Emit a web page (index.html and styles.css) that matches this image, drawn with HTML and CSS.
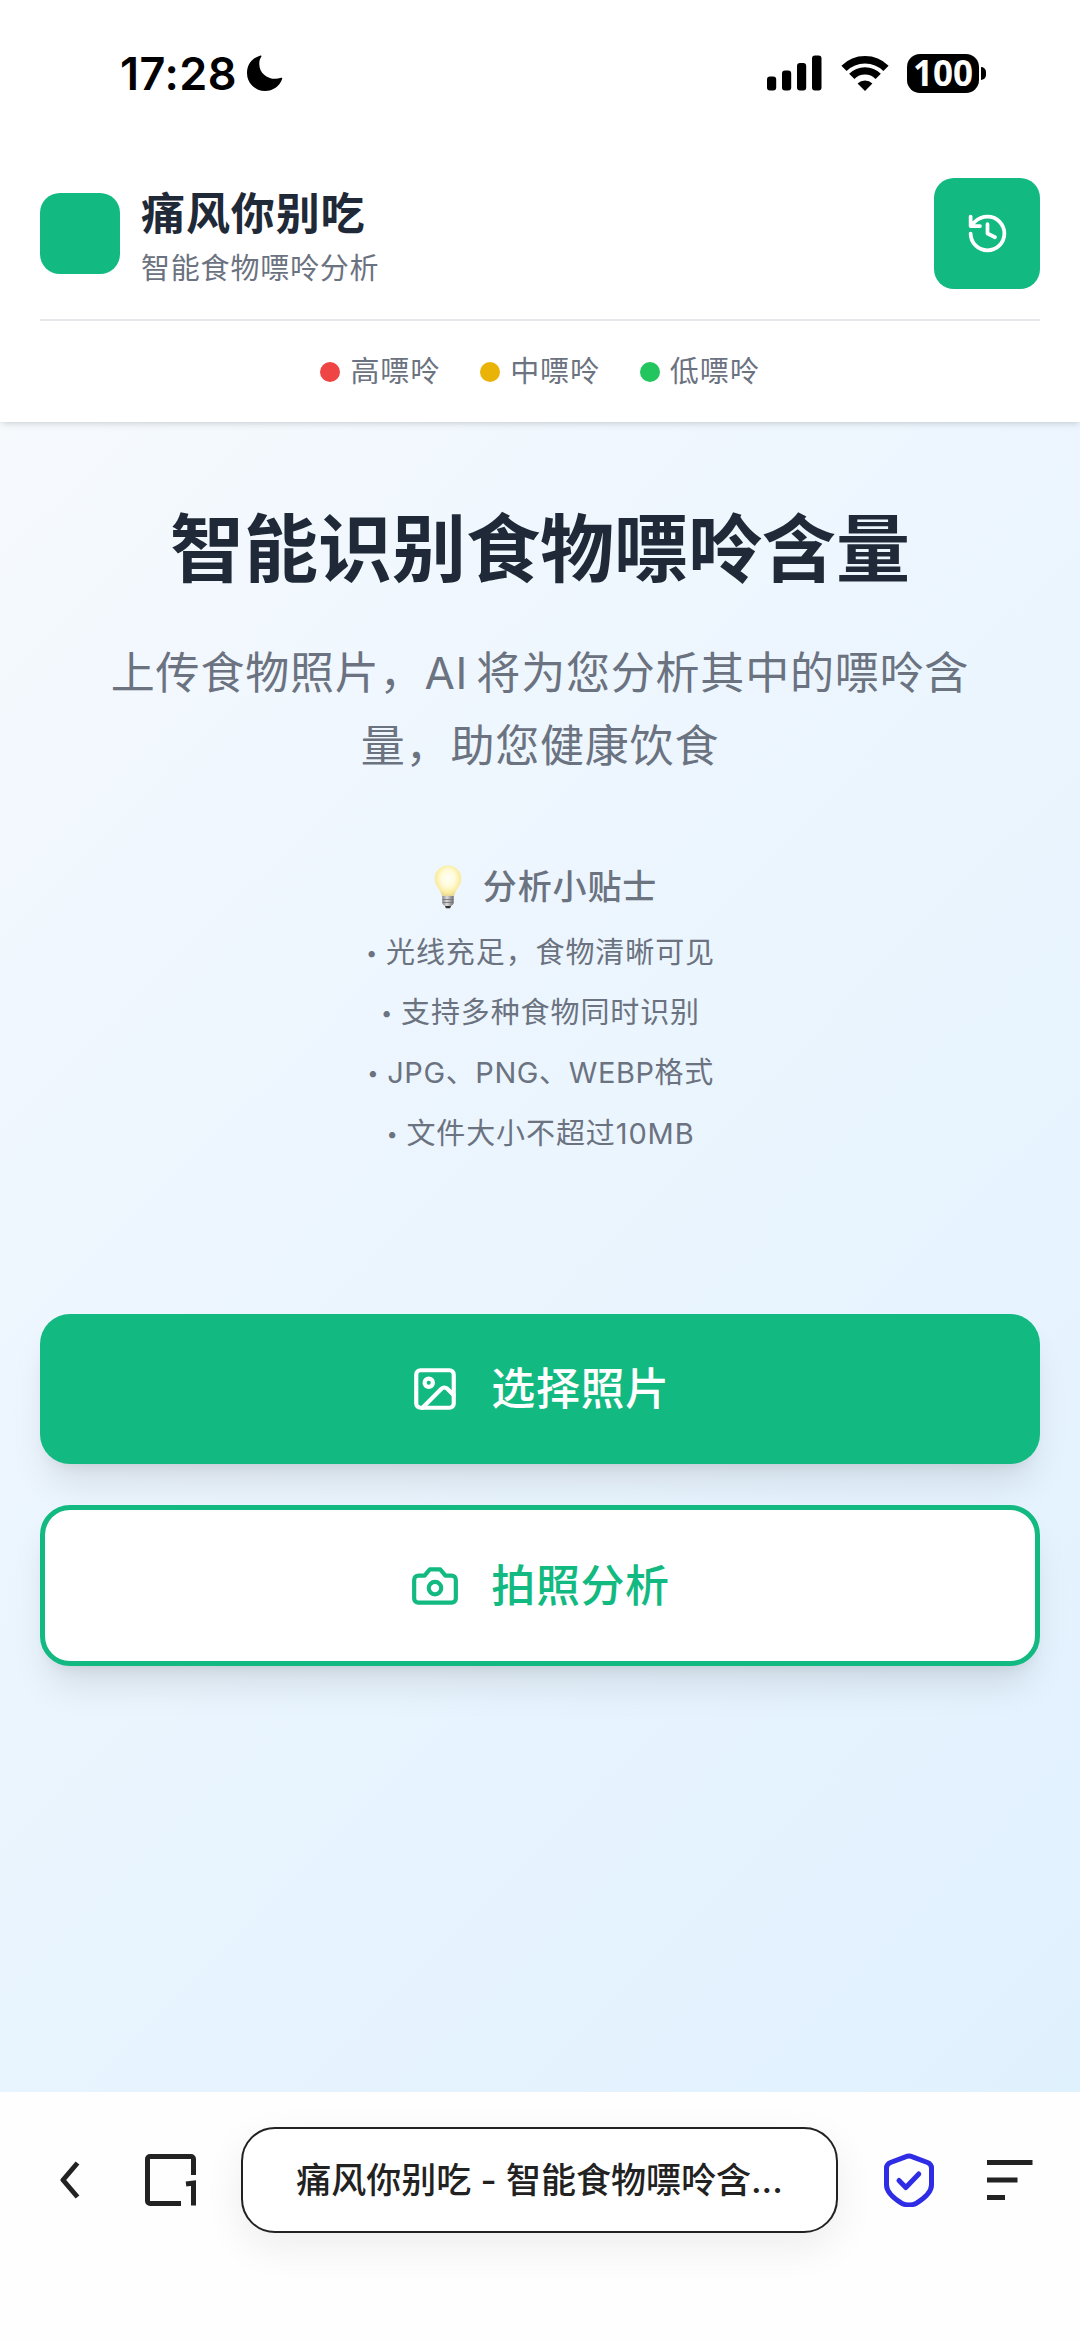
FILE: index.html
```html
<!DOCTYPE html>
<html lang="zh-CN">
<head>
<meta charset="utf-8">
<title>痛风你别吃 - 智能食物嘌呤含量分析</title>
<link rel="stylesheet" href="styles.css">
</head>
<body>
<div class="status">
  <span class="time">17:28</span>
  <svg class="moon" width="36" height="36" viewBox="0 0 36 36"><path d="M13.500 0.500C3.500 3.500 0 11 0 18a18 18 0 0 0 18 18c8 0 14.500-4.500 17.200-12.200.3-.9-.4-1.300-1.200-1C24 26.500 12 20 12.300 8.500c0-2.800.7-4.800 2-6.800.5-.8 0-1.400-.8-1.200z"/></svg>
  <svg class="signal" width="55" height="36" viewBox="0 0 55 36"><rect x="0" y="21.500" width="9.200" height="14" rx="3"/><rect x="15" y="15.500" width="9.200" height="20" rx="3"/><rect x="30" y="8" width="9.200" height="27.500" rx="3"/><rect x="45" y="0.500" width="9.500" height="35" rx="3"/></svg>
  <svg class="wifi" width="48" height="36" viewBox="0 0 48 36"><path d="M3 13.400a29.800 29.800 0 0 1 42 0M10.800 21.400a18.500 18.500 0 0 1 26.400 0" fill="none" stroke="#000" stroke-width="7.400"/><path d="M16.600 28.400a10.600 10.600 0 0 1 14.800 0L24 36z"/></svg>
  <span class="battery">100</span>
</div>
<header class="header">
  <div class="brand-row">
    <div class="logo"></div>
    <div class="brand">
      <h1 class="brand-name">痛风你别吃</h1>
      <p class="brand-sub">智能食物嘌呤分析</p>
    </div>
    <button class="history" aria-label="历史记录">
      <svg width="45" height="45" viewBox="0 0 24 24"><path d="M3 12a9 9 0 1 0 9-9 9.750 9.750 0 0 0-6.740 2.740L3 8M3 3v5h5M12 7v5l4 2"/></svg>
    </button>
  </div>
  <div class="legend">
    <span class="level high">高嘌呤</span>
    <span class="level mid">中嘌呤</span>
    <span class="level low">低嘌呤</span>
  </div>
</header>
<main class="main">
  <h2 class="title">智能识别食物嘌呤含量</h2>
  <p class="lead">上传食物照片，AI 将为您分析其中的嘌呤含量，助您健康饮食</p>
  <section class="tips">
    <div class="tips-title">
      <svg width="28" height="44" viewBox="0 0 28 44">
        <defs>
          <radialGradient id="glow" cx=".5" cy=".42" r=".55"><stop offset="0" stop-color="#fffff8"/><stop offset=".5" stop-color="#fffbd8"/><stop offset=".85" stop-color="#fbeb9c"/><stop offset="1" stop-color="#e8d998"/></radialGradient>
          <linearGradient id="cap" x1="0" x2="1"><stop offset="0" stop-color="#85858a"/><stop offset=".4" stop-color="#dcdcda"/><stop offset="1" stop-color="#6c6c70"/></linearGradient>
        </defs>
        <path d="M14 .5C6.300.5.8 6.300.8 13.500c0 8 6.200 10.500 7.200 18h12c1-7.500 7.200-10 7.200-18C27.200 6.300 21.700.5 14 .5z" fill="url(#glow)"/>
        <path d="M8.300 31h11.400v6.500c0 2-1.700 3-2.700 3.500l-1 2.300h-4L11 41c-1-.5-2.700-1.500-2.700-3.500z" fill="url(#cap)"/>
        <path d="M8.500 34.500h11M8.500 37.500h11" stroke="#77777b" stroke-width=".9"/>
        <path d="M11 41h6l-1 2.300h-4z" fill="#333"/>
      </svg>
      <span>分析小贴士</span>
    </div>
    <ul class="tips-list">
      <li>光线充足，食物清晰可见</li>
      <li>支持多种食物同时识别</li>
      <li class="mixed">JPG、PNG、WEBP格式</li>
      <li>文件大小不超过10MB</li>
    </ul>
  </section>
  <button class="btn primary">
    <svg width="50" height="50" viewBox="0 0 24 24"><rect x="3" y="3" width="18" height="18" rx="2"/><circle cx="9" cy="9" r="2"/><path d="m21 15-3.086-3.086a2 2 0 0 0-2.828 0L6 21"/></svg>
    <span>选择照片</span>
  </button>
  <button class="btn outline">
    <svg width="50" height="50" viewBox="0 0 24 24"><path d="M14.500 4h-5L7 7H4a2 2 0 0 0-2 2v9a2 2 0 0 0 2 2h16a2 2 0 0 0 2-2V9a2 2 0 0 0-2-2h-3l-2.500-3z"/><circle cx="12" cy="13" r="3"/></svg>
    <span>拍照分析</span>
  </button>
</main>
<nav class="toolbar">
  <svg class="back" width="20" height="38" viewBox="0 0 20 38"><path d="M17.500 2 3 19l14.500 17"/></svg>
  <svg class="tabs" width="52" height="52" viewBox="0 0 52 52"><path d="M48.500 21V5a2.500 2.500 0 0 0-2.500-2.500H5A2.500 2.500 0 0 0 2.500 5v42A2.500 2.500 0 0 0 5 49.500h31M41 30l7.500-1v22.500"/></svg>
  <div class="address">痛风你别吃 - 智能食物嘌呤含...</div>
  <svg class="shield" width="52" height="54" viewBox="0 0 52 54"><path d="M22.500 3.800q3.500-1.500 7 0L44.500 9.500q4 1.700 4 5.500v17c0 7-6 12.500-15 18.200q-7.500 3.500-15 0C9.500 44.500 3.500 39 3.500 32V15q0-3.800 4-5.500z"/><path d="M16 27.500l6.800 7 13-13.500"/></svg>
  <svg class="menu" width="46" height="42" viewBox="0 0 46 42"><path d="M0 3.500h45.500M0 21h30.500M0 38.500h18"/></svg>
</nav>
</body>
</html>
```
FILE: styles.css
```css
* { box-sizing: border-box; margin: 0; padding: 0; }
body {
  width: 1080px;
  height: 2341px;
  display: flex;
  flex-direction: column;
  background: #fff;
  font-family: Inter, "Noto Sans CJK SC", sans-serif;
  color: #6b7280;
  overflow: hidden;
}
svg { display: block; flex: none; }
button { font: inherit; border: 0; }

.status {
  height: 148px;
  padding: 4px 94px 6px 120px;
  display: flex;
  align-items: center;
  color: #000;
}
.time { font-size: 45px; font-weight: 600; letter-spacing: 0.5px; width: 127px; white-space: nowrap; }
.signal { margin-left: auto; }
.wifi { margin-left: 19px; }
.battery {
  position: relative;
  margin: 0 7px 0 18px;
  width: 72px;
  height: 39px;
  border-radius: 13px;
  background: #000;
  color: #fff;
  font: 700 35px/37px "Open Sans", sans-serif;
  text-align: center;
}
.battery::after {
  content: "";
  position: absolute;
  left: 74px;
  top: 13px;
  width: 5px;
  height: 13px;
  border-radius: 0 5px 5px 0;
  background: #000;
}

.header {
  position: relative;
  height: 274px;
  padding: 30px 40px 0;
  background: #fff;
  box-shadow: 0 2.5px 7.5px rgba(0,0,0,.1), 0 2.5px 5px -2.5px rgba(0,0,0,.1);
  clip-path: inset(0 0 -20px 0);
}
.brand-row { display: flex; align-items: center; height: 143px; padding-bottom: 30px; border-bottom: 2.5px solid #e5e7eb; }
.logo { width: 80px; height: 81px; border-radius: 20px; background: #12b981; }
.brand { margin-left: 21px; flex: 1; padding-top: 13px; }
.brand-name { font-size: 44px; letter-spacing: .9px; line-height: 56px; font-weight: 700; color: #1f2937; }
.brand-sub { font-size: 29px; letter-spacing: .8px; line-height: 50px; margin-top: 2px; }
.history { width: 106px; height: 111px; border-radius: 20px; background: #12b981; display: flex; align-items: center; justify-content: center; }
.history svg, .btn svg { fill: none; stroke: #fff; stroke-width: 2; stroke-linecap: round; stroke-linejoin: round; }
.legend { display: flex; justify-content: center; gap: 40px; padding-top: 26px; }
.level { display: flex; align-items: center; gap: 10px; font-size: 29px; letter-spacing: .9px; line-height: 50px; }
.level::before { content: ""; width: 20px; height: 20px; border-radius: 50%; background: currentColor; }
.high::before { background: #ef4444; }
.mid::before { background: #eab308; }
.low::before { background: #22c55e; }

.main {
  height: 1670px;
  padding: 80px 40px 0;
  display: flex;
  flex-direction: column;
  text-align: center;
  background: linear-gradient(135deg, #f6fafd 0%, #f0f7fe 22%, #e0f1fe 100%);
}
.title { font-size: 74px; line-height: 94px; font-weight: 700; color: #1f2937; }
.lead { margin: 41px 50px 0; font-size: 44px; letter-spacing: .8px; word-spacing: -5px; line-height: 73px; }
.tips { margin-top: 79px; }
.tips-title { display: flex; justify-content: center; align-items: center; gap: 21px; height: 50px; font-size: 34px; letter-spacing: .9px; font-weight: 500; padding-left: 11px; }
.tips-title span { margin-top: -5px; }
.tips-list { list-style: none; margin-top: 16px; display: flex; flex-direction: column; gap: 10px; }
.tips-list li { display: flex; justify-content: center; height: 50.2px; font-size: 29px; letter-spacing: .9px; line-height: 50px; padding-left: 1px; }
.tips-list .mixed { letter-spacing: .6px; }
.tips-list li::before { content: "•"; width: 20px; text-align: left; font-size: 20px; }
.btn {
  height: 150px;
  border-radius: 30px;
  display: flex;
  align-items: center;
  justify-content: center;
  gap: 31px;
  font-size: 44px;
  letter-spacing: .6px;
  font-weight: 500;
  box-shadow: 0 25px 37.5px -7.5px rgba(0,0,0,.1), 0 10px 15px -10px rgba(0,0,0,.1);
}
.btn span { padding-bottom: 6px; }
.primary { margin-top: 155.500px; background: #12b981; color: #fff; }
.outline { margin-top: 41px; height: 161px; background: #fff; border: 5px solid #12b981; color: #12b981; }
.btn.outline svg { stroke: #12b981; }

.toolbar {
  flex: 1;
  display: flex;
  align-items: center;
  padding: 0 47px 73px 60px;
  background: #fefefe;
}
.toolbar svg { fill: none; stroke: #222; stroke-width: 5; }
.toolbar .back { stroke-linejoin: round; }
.tabs { margin-left: 65px; }
.address {
  margin-left: 44px;
  width: 597px;
  height: 106px;
  border: 2.5px solid #222;
  border-radius: 34px;
  background: #fff;
  color: #222;
  font-size: 35px;
  font-weight: 500;
  line-height: 103px;
  text-align: center;
  white-space: nowrap;
  box-shadow: 0 14px 40px rgba(0,0,0,.07);
}
.shield { margin-left: 45px; }
.toolbar .shield { stroke: #2f2ce6; stroke-linecap: round; stroke-linejoin: round; }
.menu { margin-left: auto; }
```
